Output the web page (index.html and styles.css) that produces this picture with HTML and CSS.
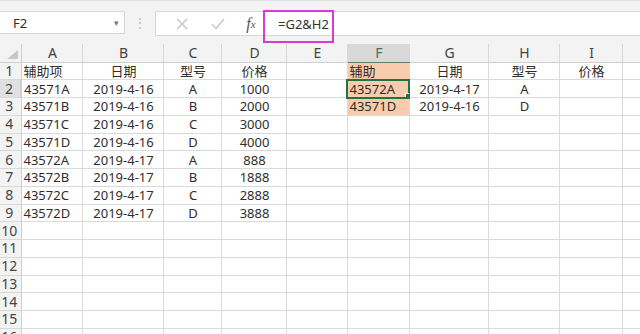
FILE: index.html
```html
<!DOCTYPE html>
<html lang="zh-CN">
<head>
    <meta charset="UTF-8">
    <meta name="viewport" content="width=device-width, initial-scale=1.0">
    <title>辅助列</title>
    <link rel="stylesheet" href="styles.css">
</head>
<body>
    <!-- Formula bar -->
    <div class="toolbar">
        <div class="name-box">
            <span>F2</span>
            <span class="arrow">▾</span>
        </div>
        <div class="dots">⋮</div>
        <div class="formula-box">
            <span class="btn">
                <svg width="12" height="12" viewBox="0 0 12 12"><path d="M1 1 L11 11 M11 1 L1 11" stroke="#c4c4c4" stroke-width="1.4" fill="none"/></svg>
            </span>
            <span class="btn">
                <svg width="14" height="12" viewBox="0 0 14 12"><path d="M1 6.5 L5 10.5 L13 1" stroke="#c4c4c4" stroke-width="1.4" fill="none"/></svg>
            </span>
            <span class="btn fx"><i>f</i><sub>x</sub></span>
            <span class="formula">=G2&amp;H2</span>
        </div>
        <!-- highlight drawn over the formula -->
        <div class="mark"></div>
    </div>

    <table class="sheet">
        <colgroup>
            <col style="width:21px">
            <col style="width:61px">
            <col style="width:81px">
            <col style="width:58px">
            <col style="width:65px">
            <col style="width:61px">
            <col style="width:62px">
            <col style="width:79px">
            <col style="width:71px">
            <col style="width:63px">
            <col style="width:40px">
        </colgroup>
        <tr class="head">
            <th class="corner"><span class="tri"></span></th>
            <th>A</th><th>B</th><th>C</th><th>D</th><th>E</th>
            <th class="sel">F</th><th>G</th><th>H</th><th>I</th><th></th>
        </tr>
        <tr>
            <th>1</th><td>辅助项</td><td class="c">日期</td><td class="c">型号</td><td class="c">价格</td><td></td>
            <td class="fill">辅助</td><td class="c">日期</td><td class="c">型号</td><td class="c">价格</td><td></td>
        </tr>
        <tr>
            <th class="sel-row">2</th><td>43571A</td><td class="c">2019-4-16</td><td class="c">A</td><td class="c">1000</td><td></td>
            <td class="fill active">43572A<span class="handle"></span></td><td class="c">2019-4-17</td><td class="c">A</td><td></td><td></td>
        </tr>
        <tr>
            <th>3</th><td>43571B</td><td class="c">2019-4-16</td><td class="c">B</td><td class="c">2000</td><td></td>
            <td class="fill">43571D</td><td class="c">2019-4-16</td><td class="c">D</td><td></td><td></td>
        </tr>
        <tr>
            <th>4</th><td>43571C</td><td class="c">2019-4-16</td><td class="c">C</td><td class="c">3000</td><td></td>
            <td></td><td></td><td></td><td></td><td></td>
        </tr>
        <tr>
            <th>5</th><td>43571D</td><td class="c">2019-4-16</td><td class="c">D</td><td class="c">4000</td><td></td>
            <td></td><td></td><td></td><td></td><td></td>
        </tr>
        <tr>
            <th>6</th><td>43572A</td><td class="c">2019-4-17</td><td class="c">A</td><td class="c">888</td><td></td>
            <td></td><td></td><td></td><td></td><td></td>
        </tr>
        <tr>
            <th>7</th><td>43572B</td><td class="c">2019-4-17</td><td class="c">B</td><td class="c">1888</td><td></td>
            <td></td><td></td><td></td><td></td><td></td>
        </tr>
        <tr>
            <th>8</th><td>43572C</td><td class="c">2019-4-17</td><td class="c">C</td><td class="c">2888</td><td></td>
            <td></td><td></td><td></td><td></td><td></td>
        </tr>
        <tr>
            <th>9</th><td>43572D</td><td class="c">2019-4-17</td><td class="c">D</td><td class="c">3888</td><td></td>
            <td></td><td></td><td></td><td></td><td></td>
        </tr>
        <tr><th>10</th><td></td><td></td><td></td><td></td><td></td><td></td><td></td><td></td><td></td><td></td></tr>
        <tr><th>11</th><td></td><td></td><td></td><td></td><td></td><td></td><td></td><td></td><td></td><td></td></tr>
        <tr><th>12</th><td></td><td></td><td></td><td></td><td></td><td></td><td></td><td></td><td></td><td></td></tr>
        <tr><th>13</th><td></td><td></td><td></td><td></td><td></td><td></td><td></td><td></td><td></td><td></td></tr>
        <tr><th>14</th><td></td><td></td><td></td><td></td><td></td><td></td><td></td><td></td><td></td><td></td></tr>
        <tr><th>15</th><td></td><td></td><td></td><td></td><td></td><td></td><td></td><td></td><td></td><td></td></tr>
        <tr><th>16</th><td></td><td></td><td></td><td></td><td></td><td></td><td></td><td></td><td></td><td></td></tr>
    </table>
</body>
</html>
```

FILE: styles.css
```css
html, body {
    margin: 0;
    padding: 0;
}
body {
    width: 640px;
    height: 334px;
    overflow: hidden;
    background: #fff;
    font-family: "Noto Sans", "Noto Sans CJK SC", sans-serif;
    font-size: 13px;
    color: #2e2e2e;
}

/* formula bar */
.toolbar {
    position: relative;
    height: 44px;
    background: #f3f3f3;
    border-top: 1px solid #e2e2e2;
    box-sizing: border-box;
    display: flex;
    align-items: flex-start;
    padding-top: 10px;
}
.name-box {
    width: 125px;
    height: 23px;
    box-sizing: border-box;
    background: #fff;
    border: 1px solid #d6d6d6;
    border-left: none;
    display: flex;
    align-items: center;
    justify-content: space-between;
    padding: 0 5px 0 13px;
}
.arrow {
    font-size: 9px;
    color: #777;
}
.dots {
    width: 30px;
    text-align: center;
    color: #c2c2c2;
    font-size: 14px;
    line-height: 23px;
}
.formula-box {
    flex: 1;
    height: 25px;
    box-sizing: border-box;
    background: #fff;
    border: 1px solid #d6d6d6;
    border-right: none;
    display: flex;
    align-items: center;
    padding-left: 8px;
}
.btn {
    width: 36px;
    display: flex;
    justify-content: center;
    align-items: center;
}
.fx {
    font-family: "Liberation Serif", serif;
    font-size: 16px;
    color: #555;
    width: 30px;
}
.fx sub {
    font-size: 11px;
    font-style: italic;
    vertical-align: -2px;
}
.formula {
    margin-left: 12px;
    font-size: 13px;
    color: #333;
}
.mark {
    position: absolute;
    left: 263px;
    top: 9px;
    width: 71px;
    height: 33px;
    box-sizing: border-box;
    border: 2px solid #d33ad6;
}

/* grid */
.sheet {
    table-layout: fixed;
    border-collapse: collapse;
    width: 621px;
}
.sheet tr {
    height: 17.75px;
}
.sheet tr.head {
    height: 18px;
}
.sheet th, .sheet td {
    border: 1px solid #dadada;
    padding: 0 0 0 2px;
    white-space: nowrap;
    overflow: hidden;
    font-weight: normal;
    line-height: 16px;
}
.sheet th {
    background: #f3f3f3;
    color: #444;
    font-size: 14px;
    border-color: #d8d8d8;
}
.sheet tr th:first-child {
    text-align: center;
    padding: 0 2px 0 0;
    font-size: 14px;
    border-left: none;
    border-right-color: #cfcfcf;
}
.head th {
    text-align: center;
    border-top: none;
    border-bottom-color: #cfcfcf;
}
.corner {
    position: relative;
}
.tri {
    position: absolute;
    right: 3px;
    bottom: 3px;
    width: 0;
    height: 0;
    border-left: 11px solid transparent;
    border-bottom: 9px solid #c8c8c8;
}
.head th.sel {
    background: #d9d9d9;
    color: #4f6b5c;
    border-bottom: 1px solid #5b7d6a;
}
.sheet th.sel-row {
    background: #e0e0e0;
    color: #444;
    border-right: 2px solid #217346;
}
.c {
    text-align: center;
}
.fill {
    background: #f8cbad;
}
.active {
    position: relative;
    outline: 2px solid #217346;
    outline-offset: -1px;
}
.handle {
    position: absolute;
    right: -3px;
    bottom: -3px;
    width: 5px;
    height: 5px;
    background: #217346;
    border: 1px solid #fff;
}
```
